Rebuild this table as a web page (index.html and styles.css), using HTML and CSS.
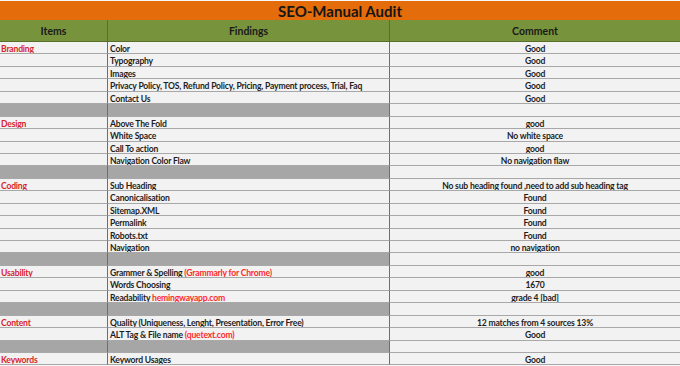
FILE: index.html
```html
<!DOCTYPE html>
<html>
<head>
<meta charset="utf-8">
<link rel="stylesheet" href="styles.css">
</head>
<body>
<div class="sheet">
  <div class="title">SEO-Manual Audit</div>
  <div class="head">
    <div class="hc">Items</div>
    <div class="hc">Findings</div>
    <div class="hc last">Comment</div>
  </div>
  <div class="grid">
    <div class="c cat">Branding</div><div class="c f">Color</div><div class="c m">Good</div>
    <div class="c cat"></div><div class="c f">Typography</div><div class="c m">Good</div>
    <div class="c cat"></div><div class="c f">Images</div><div class="c m">Good</div>
    <div class="c cat"></div><div class="c f">Privacy Policy, TOS, Refund Policy, Pricing, Payment process, Trial, Faq</div><div class="c m">Good</div>
    <div class="c cat"></div><div class="c f">Contact Us</div><div class="c m">Good</div>
    <div class="c cat sep"></div><div class="c f sep"></div><div class="c m"></div>

    <div class="c cat">Design</div><div class="c f">Above The Fold</div><div class="c m">good</div>
    <div class="c cat"></div><div class="c f">White Space</div><div class="c m">No white space</div>
    <div class="c cat"></div><div class="c f">Call To action</div><div class="c m">good</div>
    <div class="c cat"></div><div class="c f">Navigation Color Flaw</div><div class="c m">No navigation flaw</div>
    <div class="c cat sep"></div><div class="c f sep"></div><div class="c m"></div>

    <div class="c cat">Coding</div><div class="c f">Sub Heading</div><div class="c m">No sub heading found ,need to add sub heading tag</div>
    <div class="c cat"></div><div class="c f">Canonicalisation</div><div class="c m">Found</div>
    <div class="c cat"></div><div class="c f">Sitemap.XML</div><div class="c m">Found</div>
    <div class="c cat"></div><div class="c f">Permalink</div><div class="c m">Found</div>
    <div class="c cat"></div><div class="c f">Robots.txt</div><div class="c m">Found</div>
    <div class="c cat"></div><div class="c f">Navigation</div><div class="c m">no navigation</div>
    <div class="c cat sep"></div><div class="c f sep"></div><div class="c m"></div>

    <div class="c cat">Usability</div><div class="c f">Grammer &amp; Spelling <span class="red">(Grammarly for Chrome)</span></div><div class="c m">good</div>
    <div class="c cat"></div><div class="c f">Words Choosing</div><div class="c m">1670</div>
    <div class="c cat"></div><div class="c f">Readability <span class="red">hemingwayapp.com</span></div><div class="c m">grade 4 [bad]</div>
    <div class="c cat sep"></div><div class="c f sep"></div><div class="c m"></div>

    <div class="c cat">Content</div><div class="c f">Quality (Uniqueness, Lenght, Presentation, Error Free)</div><div class="c m">12 matches from 4 sources 13%</div>
    <div class="c cat"></div><div class="c f">ALT Tag &amp; File name <span class="red">(quetext.com)</span></div><div class="c m">Good</div>
    <div class="c cat sep"></div><div class="c f sep"></div><div class="c m"></div>

    <div class="c cat">Keywords</div><div class="c f">Keyword Usages</div><div class="c m">Good</div>
  </div>
</div>
</body>
</html>
```

FILE: styles.css
```css
html, body {
  margin: 0;
  padding: 0;
  background: #f7f7f7;
}
body {
  font-family: Lato, "Open Sans", "Liberation Sans", sans-serif;
  color: #1e1e1e;
  overflow: hidden;
}
.sheet {
  width: 680px;
  padding-top: 1px;
}
.title {
  height: 19px;
  background: #e46c0a;
  text-align: center;
  font-weight: 700;
  font-size: 15px;
  line-height: 20px;
  color: #151515;
}
.head {
  display: grid;
  grid-template-columns: 108px 282px 290px;
  height: 21px;
  background: #77933c;
  border-bottom: 1px solid #5a6e2c;
}
.hc {
  text-align: center;
  font-weight: 700;
  font-size: 10.5px;
  line-height: 22px;
  border-right: 1px solid #5b6b40;
  color: #1a1a1a;
}
.hc.last {
  border-right: none;
}
.grid {
  display: grid;
  grid-template-columns: 108px 282px 290px;
  grid-auto-rows: 12.45px;
  background: #f2f2f2;
}
.c {
  box-sizing: border-box;
  border-bottom: 1px solid #a8a8a8;
  font-size: 8.6px;
  font-weight: 700;
  letter-spacing: -0.2px;
  line-height: 10px;
  padding-top: 2px;
  white-space: nowrap;
  overflow: hidden;
}
.cat {
  color: #d8232a;
  padding-left: 1px;
  border-right: 1px solid #6e6e6e;
}
.f {
  padding-left: 2px;
  border-right: 1px solid #6e6e6e;
}
.m {
  text-align: center;
}
.sep {
  background: #a6a6a6;
}
.red {
  color: #ff2a2a;
}
```
